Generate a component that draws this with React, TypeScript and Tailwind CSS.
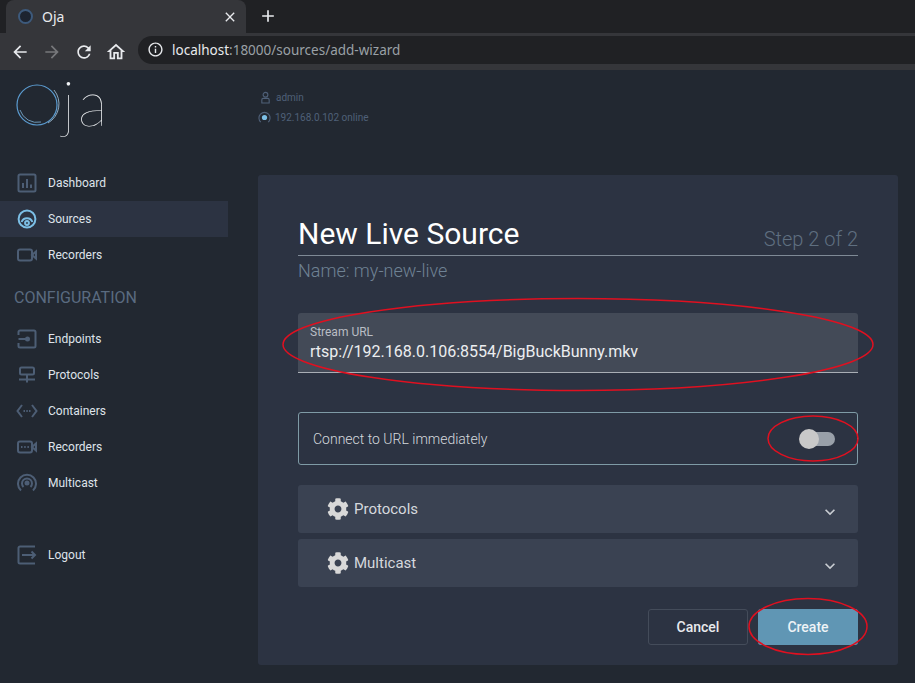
import { FaCog } from "react-icons/fa";
import {
  MdArrowBack,
  MdArrowForward,
  MdRefresh,
  MdOutlineHome,
  MdInfoOutline,
  MdClose,
  MdAdd,
  MdKeyboardArrowDown,
} from "react-icons/md";
import type { ReactNode } from "react";

const iconClass = "w-[20px] h-[20px] shrink-0 text-[#4d5e75]";

function Svg({ children, className = iconClass }: { children: ReactNode; className?: string }) {
  return (
    <svg viewBox="0 0 20 20" fill="none" stroke="currentColor" strokeWidth="2" className={className}>
      {children}
    </svg>
  );
}

const DashboardIcon = () => (
  <Svg>
    <rect x="1.500" y="1.500" width="17" height="17" rx="1.500" />
    <path d="M6 15v-5M10 15V6M14 15v-3.500" />
  </Svg>
);
const SourcesIcon = () => (
  <Svg className="w-[20px] h-[20px] shrink-0 text-[#7cbfe6]">
    <circle cx="10" cy="10" r="8.400" />
    <path d="M4.600 13a5.800 5.800 0 0 1 10.800 0" />
    <circle cx="10" cy="14" r="1.900" />
  </Svg>
);
const CameraIcon = () => (
  <Svg>
    <rect x="1" y="4.500" width="14" height="11" rx="2" />
    <path d="M15 10l4-3.500v7z" />
  </Svg>
);
const EndpointsIcon = () => (
  <Svg>
    <path d="M1.500 6V3a1.500 1.500 0 0 1 1.500-1.500h14A1.500 1.500 0 0 1 18.500 3v14a1.500 1.500 0 0 1-1.500 1.500H3A1.500 1.500 0 0 1 1.500 17v-3" />
    <path d="M1.500 10H10" />
    <circle cx="10.500" cy="10" r="1.500" fill="currentColor" />
  </Svg>
);
const ProtocolsIcon = () => (
  <Svg>
    <rect x="3" y="2.500" width="14" height="7" rx="1.500" />
    <path d="M10 9.500v8M2 14.500h16" />
  </Svg>
);
const ContainersIcon = () => (
  <svg viewBox="0 0 22 20" fill="none" stroke="currentColor" strokeWidth="2" className="w-[22px] h-[20px] shrink-0 ml-[-1px] text-[#4d5e75]">
    <path d="M6 4L1.500 10 6 16M16 4l4.500 6L16 16" />
    <path d="M7.500 10h1.500M10.300 10h1.500M13 10h1.500" />
  </svg>
);
const RecordersIcon = () => (
  <Svg>
    <rect x="1" y="4.500" width="14" height="11" rx="2" />
    <path d="M15 10l4-3.500v7z" />
    <path d="M4 10h1.500M7.200 10h1.500M10.400 10h1.500" />
  </Svg>
);
const MulticastIcon = () => (
  <Svg>
    <path d="M4 17.500a9 9 0 1 1 12 0" />
    <path d="M6.500 14a5 5 0 1 1 7 0" />
    <circle cx="10" cy="10" r="1.500" fill="currentColor" />
  </Svg>
);
const LogoutIcon = () => (
  <Svg>
    <path d="M18 1.500H3A1.500 1.500 0 0 0 1.500 3v14A1.500 1.500 0 0 0 3 18.500h15" />
    <path d="M5 10h13M14.500 6.500L18 10l-3.500 3.500" />
  </Svg>
);

function NavItem({ icon, label, active }: { icon: ReactNode; label: string; active?: boolean }) {
  return (
    <div className={`h-[36px] flex items-center pl-[17px] ${active ? "bg-[#2c3342]" : ""}`}>
      <div className="w-[31px] flex items-center">{icon}</div>
      <span className="text-[12px] text-[#dfe3ea]">{label}</span>
    </div>
  );
}

function Accordion({ label }: { label: string }) {
  return (
    <div className="h-[48px] rounded-[3px] bg-[#3a4252] flex items-center pl-[29px] pr-[18px]">
      <FaCog className="w-[22px] h-[22px] text-[#d8d8d8]" />
      <span className="ml-[5px] text-[15px] text-[#d5d8dd]">{label}</span>
      <MdKeyboardArrowDown className="ml-auto mt-[6px] w-[20px] h-[20px] text-[#c8ccd2]" />
    </div>
  );
}

export default function App() {
  return (
    <div className="relative w-[915px] h-[683px] overflow-hidden bg-[#222831] font-['Roboto',sans-serif]">
      {/* browser chrome */}
      <div className="h-[33px] bg-[#202124] flex items-end pl-[6px]">
        <div className="w-[240px] h-[33px] bg-[#35363a] rounded-t-[8px] flex items-center pl-[12px] pr-[8px] font-['Noto_Sans',sans-serif]">
          <div className="w-[15px] h-[15px] rounded-full border-[2px] border-[#3d5a7c] bg-[#1d2430]" />
          <span className="ml-[9px] text-[14px] text-[#e8eaed]">Oja</span>
          <MdClose className="ml-auto w-[16px] h-[16px] text-[#e8eaed]" />
        </div>
        <MdAdd className="ml-[12px] mb-[7px] w-[20px] h-[20px] text-[#e8eaed]" />
      </div>
      <div className="h-[37px] bg-[#35363a] flex items-center pl-[10px]">
        <MdArrowBack className="w-[20px] h-[20px] text-[#e8eaed]" />
        <MdArrowForward className="ml-[12px] w-[20px] h-[20px] text-[#77787b]" />
        <MdRefresh className="ml-[12px] w-[20px] h-[20px] text-[#e8eaed]" />
        <MdOutlineHome className="ml-[11px] w-[22px] h-[22px] text-[#e8eaed]" />
        <div className="ml-[11px] flex-1 h-[28px] mt-[-4px] rounded-l-full bg-[#202124] flex items-center pl-[9px] font-['Noto_Sans',sans-serif] text-[13.500px]">
          <MdInfoOutline className="w-[17px] h-[17px] text-[#e8eaed]" />
          <span className="ml-[8px] mt-[1px] text-[#e8eaed]">localhost</span>
          <span className="mt-[1px] text-[#9aa0a6]">:18000/sources/add-wizard</span>
        </div>
      </div>

      <div className="flex h-[613px]">
        {/* sidebar */}
        <aside className="w-[228px] shrink-0">
          <div className="h-[95px] pl-[16px] pt-[13px] flex items-start">
            <svg viewBox="0 0 44 44" className="w-[44px] h-[44px] shrink-0" fill="none">
              <circle cx="21" cy="22" r="20" stroke="#5b9bd0" strokeWidth="1.200" />
              <path d="M38 7a22 22 0 0 1-6 33" stroke="#a8c8de" strokeWidth="0.800" />
              <path d="M4 27a18 18 0 0 0 21 12" stroke="#7fb4d8" strokeWidth="0.800" />
            </svg>
            <span className="ml-[2px] mt-[-13px] font-['Lato',sans-serif] font-thin text-[62px] leading-[64px] tracking-[3px] text-[#f2f4f6]">ja</span>
          </div>
          <NavItem icon={<DashboardIcon />} label="Dashboard" />
          <NavItem icon={<SourcesIcon />} label="Sources" active />
          <NavItem icon={<CameraIcon />} label="Recorders" />
          <div className="h-[48px] flex items-center pl-[14px] pt-[2px] text-[16px] text-[#5a6b80]">CONFIGURATION</div>
          <NavItem icon={<EndpointsIcon />} label="Endpoints" />
          <NavItem icon={<ProtocolsIcon />} label="Protocols" />
          <NavItem icon={<ContainersIcon />} label="Containers" />
          <NavItem icon={<RecordersIcon />} label="Recorders" />
          <NavItem icon={<MulticastIcon />} label="Multicast" />
          <div className="h-[36px]" />
          <NavItem icon={<LogoutIcon />} label="Logout" />
        </aside>

        {/* main */}
        <main className="w-[670px] pl-[30px]">
          <div className="h-[105px] pt-[17px] text-[10px] text-[#4f6078]">
            <div className="h-[20px] flex items-center gap-[5px] pl-[2px]">
              <svg viewBox="0 0 12 14" fill="none" stroke="currentColor" strokeWidth="1.200" className="w-[11px] h-[13px]">
                <circle cx="6" cy="4" r="2.600" />
                <path d="M2 13V9.500A1.500 1.500 0 0 1 3.500 8h5A1.500 1.500 0 0 1 10 9.500V13z" />
              </svg>
              <span>admin</span>
            </div>
            <div className="h-[20px] flex items-center gap-[4px]">
              <svg viewBox="0 0 14 14" fill="none" className="w-[13px] h-[13px]">
                <path d="M3 12a6 6 0 1 1 8 0" stroke="currentColor" strokeWidth="1.200" />
                <circle cx="7" cy="7" r="2.800" fill="#7cbfe6" />
              </svg>
              <span>192.168.0.102 online</span>
            </div>
          </div>

          <section className="w-[640px] h-[490px] rounded-[3px] bg-[#2c3342] px-[40px] pt-[40px]">
            <div className="h-[41px] flex items-end justify-between border-b border-[#7f8a96]">
              <h1 className="text-[30px] leading-[36px] text-white mb-[3px]">New Live Source</h1>
              <span className="text-[20px] font-light text-[#5f6f80] mb-[1px]">Step 2 of 2</span>
            </div>
            <div className="mt-[3px] text-[18px] leading-[24px] font-light text-[#6f8294]">Name: my-new-live</div>

            <div className="mt-[30px] h-[60px] rounded-t-[3px] bg-[#434a57] border-b border-[#a9aeb5] pl-[12px] pt-[12px]">
              <div className="text-[12px] leading-[14px] text-[#b9bdc4]">Stream URL</div>
              <div className="mt-[2px] text-[16px] leading-[22px] text-[#eceef0]">rtsp://192.168.0.106:8554/BigBuckBunny.mkv</div>
            </div>

            <div className="mt-[39px] h-[53px] rounded-[3px] border border-[#7f9ba6] flex items-center pl-[14px] pr-[22px]">
              <span className="mt-[2px] text-[14px] font-light text-[#d5d9de]">Connect to URL immediately</span>
              <div className="ml-auto w-[36px] h-[20px] flex items-center relative">
                <div className="ml-[8px] w-[28px] h-[14px] rounded-full bg-[#99a0a9]" />
                <div className="absolute left-0 top-0 w-[20px] h-[20px] rounded-full bg-[#c9c9c9]" />
              </div>
            </div>

            <div className="mt-[20px] flex flex-col gap-[6px]">
              <Accordion label="Protocols" />
              <Accordion label="Multicast" />
            </div>

            <div className="mt-[22px] flex justify-end gap-[10px]">
              <button className="w-[100px] h-[36px] rounded-[3px] border border-[#444c5a] text-[14px] font-medium text-[#e8eaed]">Cancel</button>
              <button className="w-[100px] h-[36px] rounded-[3px] bg-[#6096b4] text-[14px] font-medium text-[#eef3f6]">Create</button>
            </div>
          </section>
        </main>
      </div>

      {/* red annotations */}
      <svg viewBox="0 0 915 683" fill="none" stroke="#e01020" strokeWidth="1.500" className="absolute inset-0 w-[915px] h-[683px] pointer-events-none">
        <ellipse cx="578" cy="344.500" rx="295" ry="46" />
        <ellipse cx="813" cy="438.500" rx="45" ry="22.500" />
        <ellipse cx="808" cy="626.500" rx="59" ry="28" />
      </svg>
    </div>
  );
}
